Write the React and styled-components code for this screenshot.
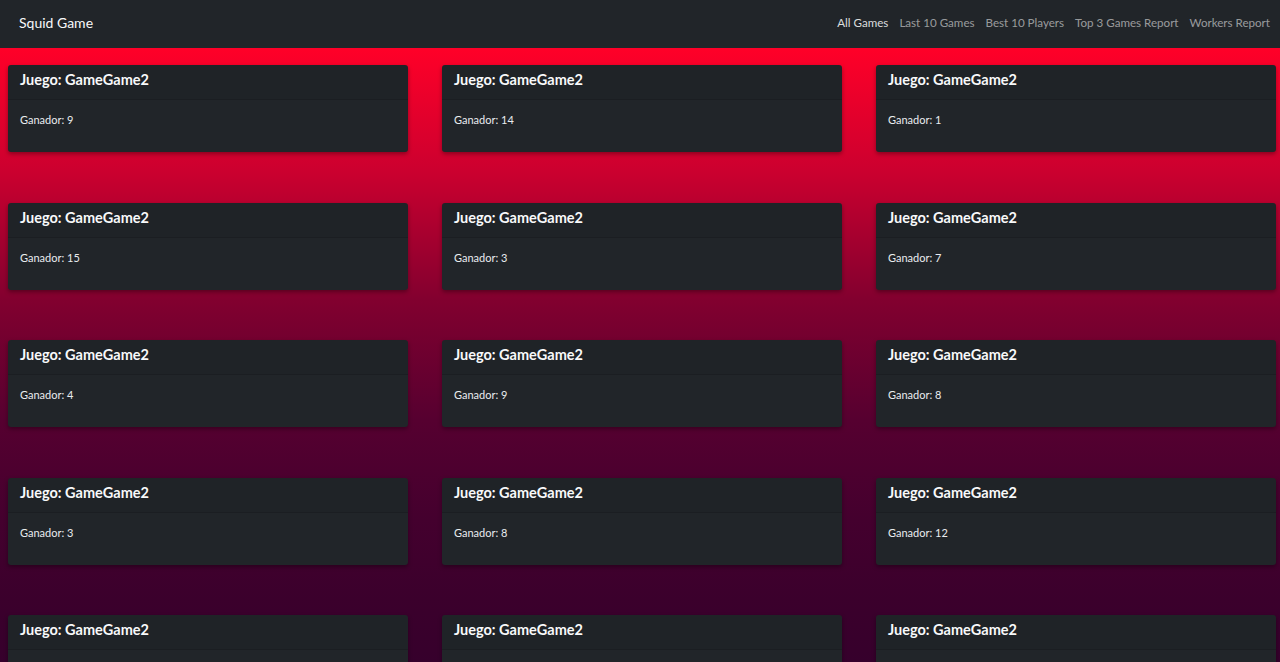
import { createGlobalStyle, styled } from 'styled-components';

const games = [9, 14, 1, 15, 3, 7, 4, 9, 8, 3, 8, 12, 5, 2, 6];

const links = ['All Games', 'Last 10 Games', 'Best 10 Players', 'Top 3 Games Report', 'Workers Report'];

const GlobalStyle = createGlobalStyle`
  html, body {
    margin: 0;
    padding: 0;
    height: 100%;
    overflow: hidden;
  }
  body {
    font-family: Lato, 'Noto Sans', sans-serif;
    background: #3a002c;
  }
`;

const App = () => (
  <>
    <GlobalStyle />
    <Page>
      <Navbar>
        <Brand>Squid Game</Brand>
        <NavLinks>
          {links.map((l, i) => (
            <NavLink key={l} active={i === 0 ? 1 : 0}>{l}</NavLink>
          ))}
        </NavLinks>
      </Navbar>

      <Grid>
        {games.map((g, i) => (
          <Card key={i}>
            <CardHeader>Juego: GameGame2</CardHeader>
            <CardBody>Ganador: {g}</CardBody>
          </Card>
        ))}
      </Grid>
    </Page>
  </>
);

export default App;

const Page = styled.div`
  min-height: 662px;
  background: linear-gradient(
    to bottom,
    #ff0028 0px,
    #ff0028 48px,
    #cc002f 170px,
    #82002f 300px,
    #560030 420px,
    #44002e 520px,
    #3b002c 600px,
    #36002c 662px
  );
`;

const Navbar = styled.nav`
  height: 48px;
  background: #212529;
  display: flex;
  align-items: center;
  justify-content: space-between;
  padding: 0 10px 4px 19px;
  box-sizing: border-box;
`;

const Brand = styled.div`
  color: #f8f9fa;
  font-size: 14px;
`;

const NavLinks = styled.div`
  display: flex;
  gap: 11px;
`;

const NavLink = styled.span`
  font-size: 11.6px;
  color: ${({ active }) => (active ? 'rgba(255,255,255,0.85)' : 'rgba(255,255,255,0.55)')};
`;

const Grid = styled.div`
  display: grid;
  grid-template-columns: repeat(3, 400px);
  grid-auto-rows: 87px;
  column-gap: 34px;
  row-gap: 50.5px;
  padding: 17px 0 0 8px;
`;

const Card = styled.div`
  background: #212529;
  border-radius: 3px;
  box-shadow: 0 2px 4px rgba(0, 0, 0, 0.35);
  display: flex;
  flex-direction: column;
  overflow: hidden;
`;

const CardHeader = styled.div`
  height: 35px;
  box-sizing: border-box;
  padding: 6px 12px 0;
  color: #f8f9fa;
  font-size: 14.5px;
  font-weight: 700;
  background: rgba(0, 0, 0, 0.03);
  border-bottom: 1px solid rgba(0, 0, 0, 0.125);
`;

const CardBody = styled.div`
  padding: 13px 12px;
  color: #e9ecef;
  font-size: 11px;
`;
